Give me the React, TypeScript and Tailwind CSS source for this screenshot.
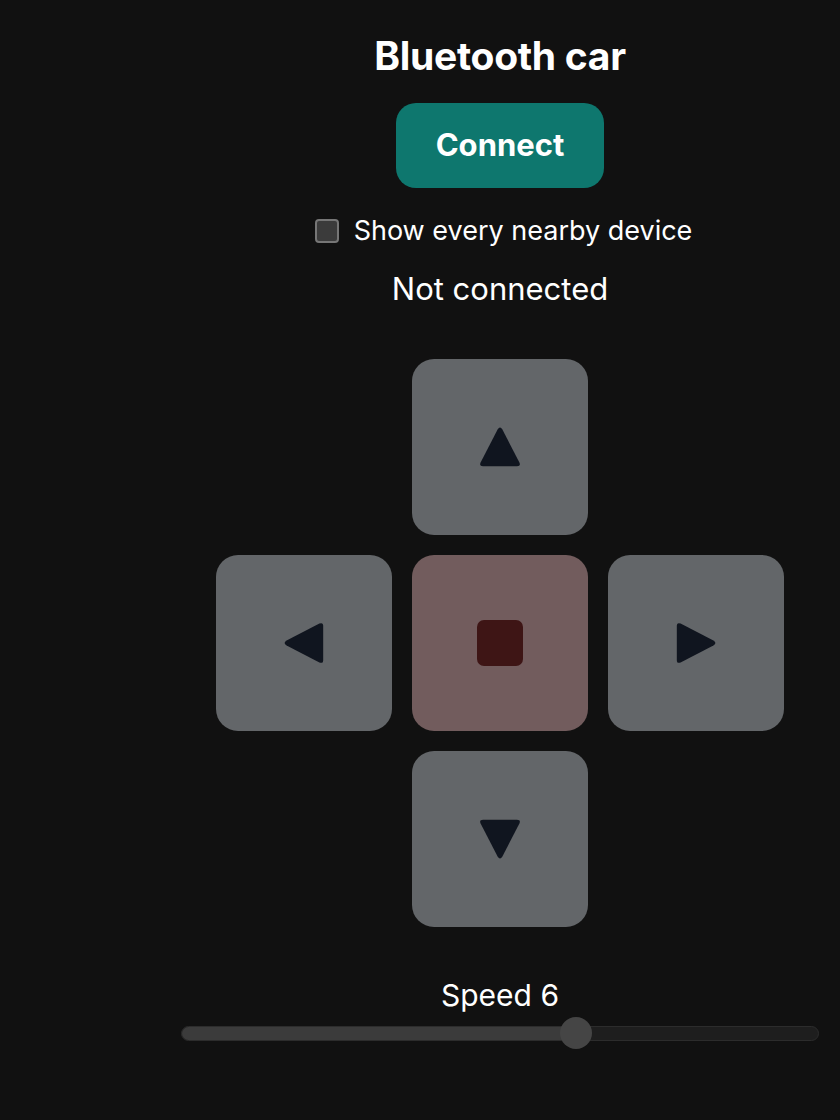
import { useState } from 'react'

type Dir = 'up' | 'down' | 'left' | 'right'

function Arrow({ dir }: { dir: Dir }) {
  const rot = { up: 0, right: 90, down: 180, left: 270 }[dir]
  return (
    <svg width="42" height="42" viewBox="0 0 42 42" style={{ transform: `rotate(${rot}deg)` }}>
      <path
        d="M18.6 3.6 Q21 -0.4 23.4 3.6 L40.4 36.4 Q42 40.2 38 40.2 L4 40.2 Q0 40.2 1.6 36.4 Z"
        fill="#10151f"
      />
    </svg>
  )
}

function PadButton({ dir }: { dir: Dir }) {
  return (
    <button className="w-[176px] h-[176px] rounded-[22px] bg-[#636669] flex items-center justify-center">
      <Arrow dir={dir} />
    </button>
  )
}

export default function App() {
  const [speed] = useState(6)
  const [showAll, setShowAll] = useState(false)
  const min = 1
  const max = 9
  const frac = (speed - min) / (max - min)

  return (
    <div
      className="min-h-[1120px] w-full bg-[#111111] text-white"
      style={{ fontFamily: 'Inter, "Noto Sans", sans-serif' }}
    >
      <div className="ml-[180px] w-[640px] flex flex-col items-center pt-[33px]">
        <h1 className="text-[39px] leading-[46px] font-bold tracking-[-0.3px]">Bluetooth car</h1>

        <button className="mt-[24px] w-[208px] h-[85px] rounded-[20px] bg-[#0e776e] text-[31px] font-bold">
          Connect
        </button>

        <label className="mt-[27px] pl-[7px] flex items-center gap-[15px] cursor-pointer">
          <input
            type="checkbox"
            checked={showAll}
            onChange={(e) => setShowAll(e.target.checked)}
            className="appearance-none w-[24px] h-[24px] rounded-[4px] bg-[#3b3b3b] border-2 border-[#767676]"
          />
          <span className="text-[27px] leading-[32px]">Show every nearby device</span>
        </label>

        <p className="mt-[24px] text-[31px] leading-[36px]">Not connected</p>

        {/* D-pad */}
        <div className="mt-[52px] grid grid-cols-[176px_176px_176px] gap-[20px]">
          <div />
          <PadButton dir="up" />
          <div />
          <PadButton dir="left" />
          <button className="w-[176px] h-[176px] rounded-[22px] bg-[#725c5d] flex items-center justify-center">
            <div className="w-[46px] h-[46px] rounded-[7px] bg-[#3e1515]" />
          </button>
          <PadButton dir="right" />
          <div />
          <PadButton dir="down" />
          <div />
        </div>

        <p className="mt-[50px] text-[30px] leading-[36px]">Speed {speed}</p>

        {/* Slider */}
        <div className="relative mt-[4px] w-[638px] h-[32px] flex items-center">
          <div className="w-full h-[15px] rounded-full bg-[#1e1e1e] border border-[#2c2c2c] overflow-hidden">
            <div className="h-full bg-[#3b3b3b]" style={{ width: `${16 + frac * 606}px` }} />
          </div>
          <div
            className="absolute top-0 w-[32px] h-[32px] rounded-full bg-[#454545]"
            style={{ left: `${frac * 606}px` }}
          />
        </div>
      </div>
    </div>
  )
}
